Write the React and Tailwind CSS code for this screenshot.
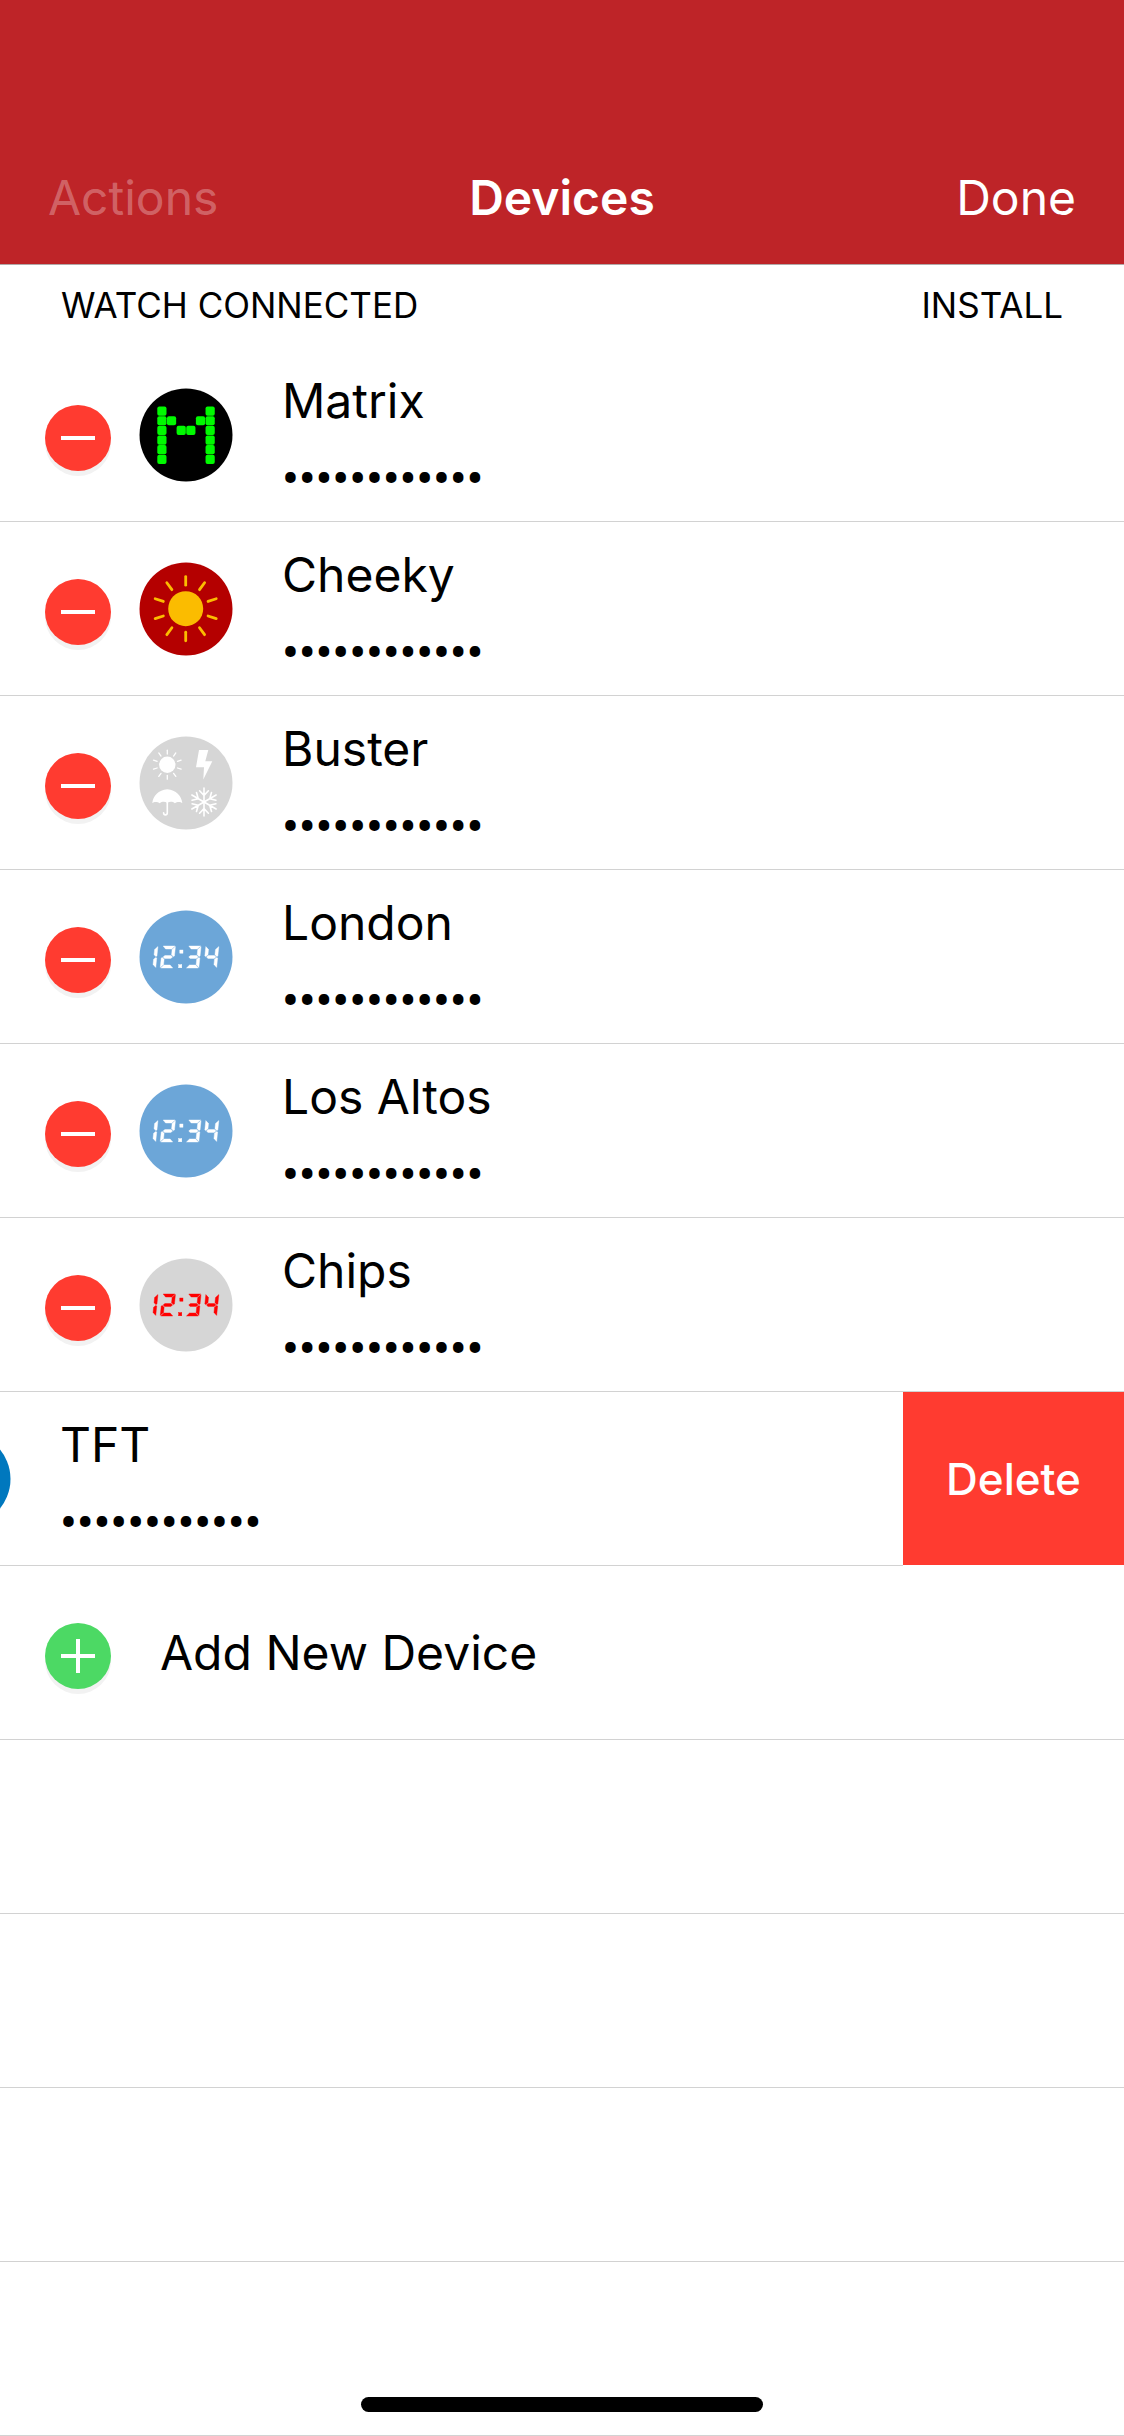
const FONT = "font-['Inter','Liberation_Sans',sans-serif]";

const RAYS = [0, 36, 72, 108, 144, 180, 216, 252, 288, 324];

function Disc({ fill, children }) {
  return (
    <svg viewBox="0 0 94 94" className="size-[94px] shrink-0" aria-hidden="true">
      <circle cx="47" cy="47" r="46.5" fill={fill} />
      {children}
    </svg>
  );
}

const MATRIX = ["X....X", "XX..XX", "X.XX.X", "X....X", "X....X", "X....X"];

function MatrixIcon() {
  return (
    <Disc fill="#000000">
      {MATRIX.flatMap((line, r) =>
        [...line].map((c, i) =>
          c === "X" ? (
            <rect
              key={`${r}-${i}`}
              x={18.3 + i * 9.65}
              y={18.5 + r * 9.65}
              width="9.2"
              height="9.2"
              rx="2"
              fill="#00fa00"
            />
          ) : null
        )
      )}
    </Disc>
  );
}

function SunIcon() {
  return (
    <Disc fill="#b40000">
      <circle cx="46.7" cy="46.7" r="17.5" fill="#fbbc00" />
      <g stroke="#fbbc00" strokeWidth="2.8" strokeLinecap="round">
        {RAYS.map((a) => (
          <line key={a} x1="46.7" y1="23.2" x2="46.7" y2="14.6" transform={`rotate(${a} 46.7 46.7)`} />
        ))}
      </g>
    </Disc>
  );
}

function WeatherIcon() {
  return (
    <Disc fill="#d6d6d6">
      <g fill="#ffffff" stroke="#ffffff">
        <circle cx="28.3" cy="28.7" r="8.2" stroke="none" />
        <g strokeWidth="1.3" strokeLinecap="round">
          {RAYS.map((a) => (
            <line key={a} x1="28.3" y1="18" x2="28.3" y2="14.2" transform={`rotate(${a} 28.3 28.7)`} />
          ))}
        </g>
        <path d="M60 14H69.3L66.3 25.3H73.3L64.3 43.5L65 31.3H57Z" stroke="none" />
        <path
          d="M28.3 53.3C19.5 54 14 60 13.3 67C15 65.6 18.5 65.4 20.8 67.3C23 65.4 26 65.4 28.3 67C30.6 65.4 33.6 65.4 35.8 67.3C38.1 65.4 41.6 65.6 43.3 67C42.6 60 37 54 28.3 53.3Z"
          stroke="none"
        />
        <path d="M28.3 65V76.8C28.3 79.6 24.6 79.6 24.6 76.8" fill="none" strokeWidth="1.6" strokeLinecap="round" />
        <g fill="none" strokeWidth="1.6" strokeLinecap="round">
          {[0, 60, 120, 180, 240, 300].map((a) => (
            <path key={a} d="M65 66V52M65 59.4L60.6 54.8M65 59.4L69.4 54.8" transform={`rotate(${a} 65 66)`} />
          ))}
        </g>
      </g>
    </Disc>
  );
}

const SEGMENTS = {
  a: "0.7,0 12.5,0 9.6,3 3.4,3",
  b: "13,0.6 13,10 12,10.6 10,8.8 10,3.6",
  c: "13,12 13,21.4 10,18.4 10,13.2 12,11.4",
  d: "0.7,22 12.5,22 9.6,19 3.4,19",
  e: "0,12 0,21.4 3,18.4 3,13.2 1,11.4",
  f: "0,0.6 0,10 1,10.6 3,8.8 3,3.6",
  g: "1.8,11 3.4,9.6 9.6,9.6 11.2,11 9.6,12.4 3.4,12.4",
};

const CLOCK = [
  [3.7, "bc"],
  [21.2, "abged"],
  [46.8, "abgcd"],
  [64.6, "fgbc"],
];

function ClockIcon({ disc, ink }) {
  return (
    <Disc fill={disc}>
      <g fill={ink} stroke={ink} strokeWidth="0.4">
        {CLOCK.map(([x, on]) => (
          <g key={x} transform={`translate(${x + 2.3} 36) skewX(-6)`}>
            {[...on].map((s) => (
              <polygon key={s} points={SEGMENTS[s]} />
            ))}
          </g>
        ))}
        <rect x="40.8" y="40" width="3.2" height="3.2" />
        <rect x="39.6" y="54.6" width="3.2" height="3.2" />
      </g>
    </Disc>
  );
}

function RoundButton({ label, className, plus }) {
  return (
    <button
      type="button"
      aria-label={label}
      className={`mt-[6px] flex size-[66px] shrink-0 items-center justify-center rounded-full shadow-[0_5px_0_#f2f2f2] ${className}`}
    >
      <svg viewBox="0 0 34 34" className="size-[34px]" stroke="#ffffff" strokeWidth="4" aria-hidden="true">
        <path d={plus ? "M0 17H34M17 0V34" : "M0 17H34"} />
      </svg>
    </button>
  );
}

function DeviceText({ name }) {
  return (
    <div className="self-start pt-[23px]">
      <p className="text-[48px] leading-[60px]">{name}</p>
      <p className="mt-[18px] font-['Roboto',sans-serif] text-[48px] leading-[60px] font-medium" aria-label="Hidden key">
        ••••••••••••
      </p>
    </div>
  );
}

const DEVICES = [
  { name: "Matrix", icon: <MatrixIcon /> },
  { name: "Cheeky", icon: <SunIcon /> },
  { name: "Buster", icon: <WeatherIcon /> },
  { name: "London", icon: <ClockIcon disc="#6ca6d8" ink="#ffffff" /> },
  { name: "Los Altos", icon: <ClockIcon disc="#6ca6d8" ink="#ffffff" /> },
  { name: "Chips", icon: <ClockIcon disc="#d6d6d6" ink="#ff0000" /> },
];

export default function App() {
  return (
    <div className={`relative w-full overflow-hidden bg-white text-black ${FONT}`}>
      <header className="grid grid-cols-3 items-center border-b border-[#b2a8a8] bg-[#be2428] px-12 pt-[168px] pb-9 text-[48px] leading-[60px] text-white">
        <button type="button" disabled className="justify-self-start text-white/30">
          Actions
        </button>
        <h1 className="text-center font-semibold">Devices</h1>
        <button type="button" className="justify-self-end">
          Done
        </button>
      </header>

      <main>
        <div className="flex h-[83px] items-center justify-between px-[61px] pb-1 text-[35px] leading-[44px]">
          <h2>WATCH CONNECTED</h2>
          <button type="button">INSTALL</button>
        </div>

        <ul>
          {DEVICES.map(({ name, icon }) => (
            <li key={name} className="flex h-[174px] items-center border-b border-[#d2d2d2] pl-[45px]">
              <RoundButton label={`Remove ${name}`} className="bg-[#ff3b30]" />
              <div className="ml-7 mr-[49px]">{icon}</div>
              <DeviceText name={name} />
            </li>
          ))}

          <li className="flex h-[174px]">
            <div className="flex flex-1 items-center border-b border-[#d2d2d2]">
              <div className="-ml-[83px] mr-[49px]">
                <Disc fill="#0078be" />
              </div>
              <DeviceText name="TFT" />
            </div>
            <button type="button" className="mb-px w-[221px] bg-[#ff3b30] text-[44px] leading-[60px] font-medium text-white">
              Delete
            </button>
          </li>

          <li className="flex h-[174px] items-center border-b border-[#d2d2d2] pl-[45px]">
            <RoundButton label="Add" className="bg-[#4cd964]" plus />
            <p className="ml-[49px] text-[48px] leading-[60px]">Add New Device</p>
          </li>

          {[0, 1, 2, 3].map((i) => (
            <li key={i} aria-hidden="true" className="h-[174px] border-b border-[#d2d2d2]" />
          ))}
        </ul>
      </main>

      <div className="absolute bottom-6 left-1/2 h-[15px] w-[402px] -translate-x-1/2 rounded-full bg-black" />
    </div>
  );
}
